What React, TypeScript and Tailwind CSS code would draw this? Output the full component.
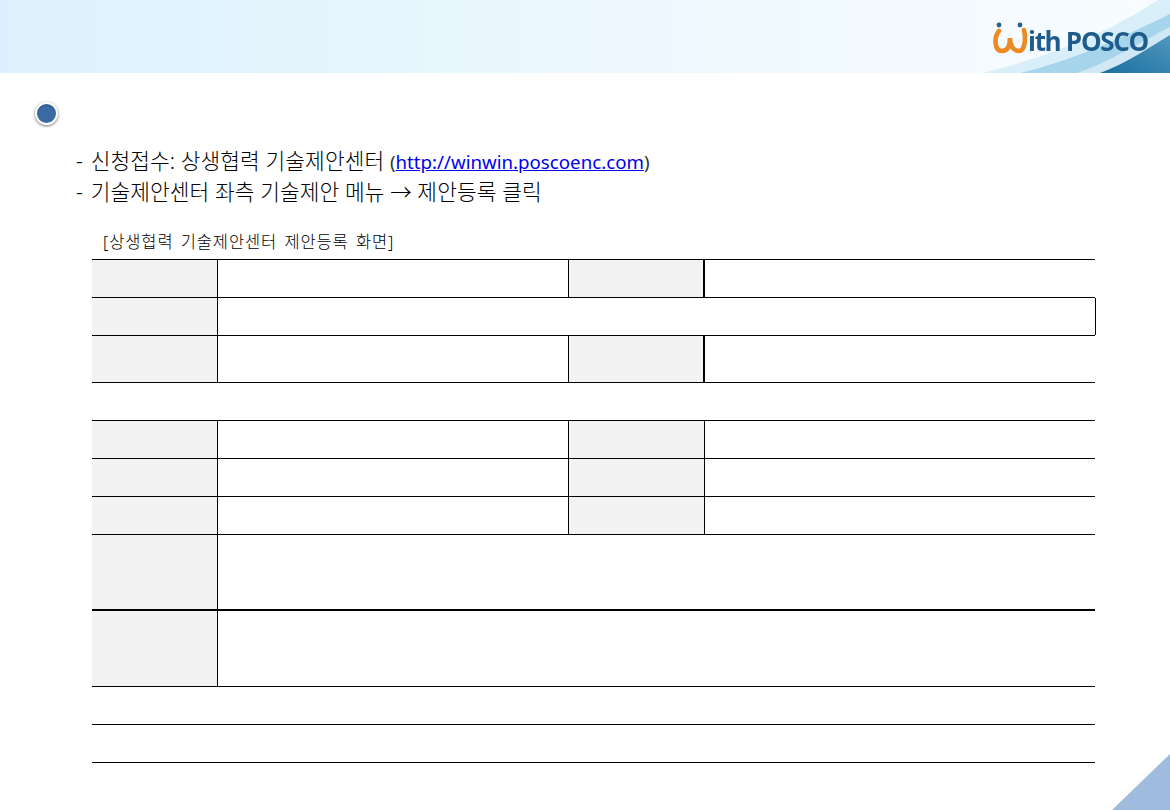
const cell = 'h-full shrink-0 border-r border-black bg-[#f2f2f2]'

function Row({ h, children, thick }: { h: string; children?: React.ReactNode; thick?: boolean }) {
  return <div className={`flex ${h} ${thick ? 'border-b-2' : 'border-b'} border-black`}>{children}</div>
}

function Label() {
  return <div className={`w-[126px] ${cell}`} />
}

function TwoCol({ heavy }: { heavy?: boolean }) {
  return (
    <>
      <Label />
      <div className="w-[351px] h-full shrink-0 border-r border-black" />
      <div className={`h-full w-[136px] shrink-0 bg-[#f2f2f2] border-black ${heavy ? 'border-r-2' : 'border-r'}`} />
    </>
  )
}

function Header() {
  return (
    <header className="relative h-[73px] overflow-hidden bg-gradient-to-r from-[#dcf1fd] via-[#ecf8fe] to-[#f8fcff]">
      <svg className="absolute inset-0" width="1170" height="73" viewBox="0 0 1170 73">
        <defs>
          <linearGradient id="deep" x1="0" y1="1" x2="1" y2="0">
            <stop offset="0" stopColor="#1b6f9f" />
            <stop offset="1" stopColor="#4f97bf" />
          </linearGradient>
        </defs>
        <path d="M982 73 C1050 57 1110 32 1158 0 L1170 0 L1170 73 Z" fill="#d8eef8" />
        <path d="M1020 73 C1075 60 1125 36 1170 14 L1170 73 Z" fill="#a6d4ea" />
        <path d="M1077 73 C1110 62 1140 42 1170 27 L1170 73 Z" fill="#cfe8f4" />
        <path d="M1100 73 C1125 64 1150 47 1170 35 L1170 73 Z" fill="url(#deep)" />
      </svg>
      <svg className="absolute left-[992px] top-[20px] blur-[0.4px]" width="38" height="36" viewBox="0 0 38 36" fill="none">
        <circle cx="7" cy="5" r="2.4" fill="#2e5f88" />
        <circle cx="28" cy="5" r="2.4" fill="#2e5f88" />
        <path d="M7 11 C2 17 2 31 10 31 C16 31 18 25 18 18 C18 25 21 31 27 31 C33 31 34 18 32 10" stroke="#ec8a23" strokeWidth="4.6" strokeLinecap="round" />
      </svg>
      <span className="absolute left-[1028px] top-[23px] font-['Open_Sans',sans-serif] text-[26px] leading-[36px] font-bold tracking-[-1.3px] text-[#1d5c8c] blur-[0.4px]">ith POSCO</span>
    </header>
  )
}

export default function App() {
  return (
    <div className="relative h-[810px] w-[1170px] overflow-hidden bg-white font-['Noto_Sans','Noto_Sans_CJK_KR',sans-serif]">
      <Header />
      <div className="mt-[29px] ml-[35px] h-[23px] w-[23px] rounded-full border-[2px] border-white bg-[#3b6aa3] shadow-[0_1px_3px_rgba(0,0,0,0.55),inset_0_2px_1px_rgba(0,0,0,0.12)]" />
      <div className="mt-[20px] ml-[76px] h-[63px] text-[21.4px] leading-[31px] tracking-[0.1px] font-light text-black">
        <p><span className="mr-[2px]">-</span> 신청접수: 상생협력 기술제안센터 <span className="text-[18.7px] leading-none tracking-normal font-normal text-[#333]">(</span><span className="text-[18.7px] leading-none tracking-normal font-normal text-[#0000ee] underline">http://winwin.poscoenc.com</span><span className="text-[18.7px] leading-none tracking-normal font-normal text-[#333]">)</span></p>
        <p><span className="mr-[2px]">-</span> 기술제안센터 좌측 기술제안 메뉴 → 제안등록 클릭</p>
      </div>
      <p className="mt-[24px] ml-[103px] text-[16.5px] leading-[20px] tracking-[0.9px] [word-spacing:2px] font-light text-black">[상생협력 기술제안센터 제안등록 화면]</p>
      <div className="ml-[92px] mt-[7px] w-[1003px] border-t border-black">
        <Row h="h-[38px]"><TwoCol heavy /></Row>
        <Row h="h-[38px]"><Label /><div className="flex-1 border-r border-black -mr-px" /></Row>
        <Row h="h-[47px]"><TwoCol heavy /></Row>
        <Row h="h-[38px]" />
        <Row h="h-[38px]"><TwoCol /></Row>
        <Row h="h-[38px]"><TwoCol /></Row>
        <Row h="h-[38px]"><TwoCol /></Row>
        <Row h="h-[76px]" thick><Label /></Row>
        <Row h="h-[76px]"><Label /></Row>
        <Row h="h-[38px]" />
        <Row h="h-[38px]" />
      </div>
      <svg className="absolute bottom-0 right-0" width="58" height="56" viewBox="0 0 58 56">
        <path d="M0 56 L58 0 L58 56 Z" fill="#9fbbdd" />
      </svg>
    </div>
  )
}
